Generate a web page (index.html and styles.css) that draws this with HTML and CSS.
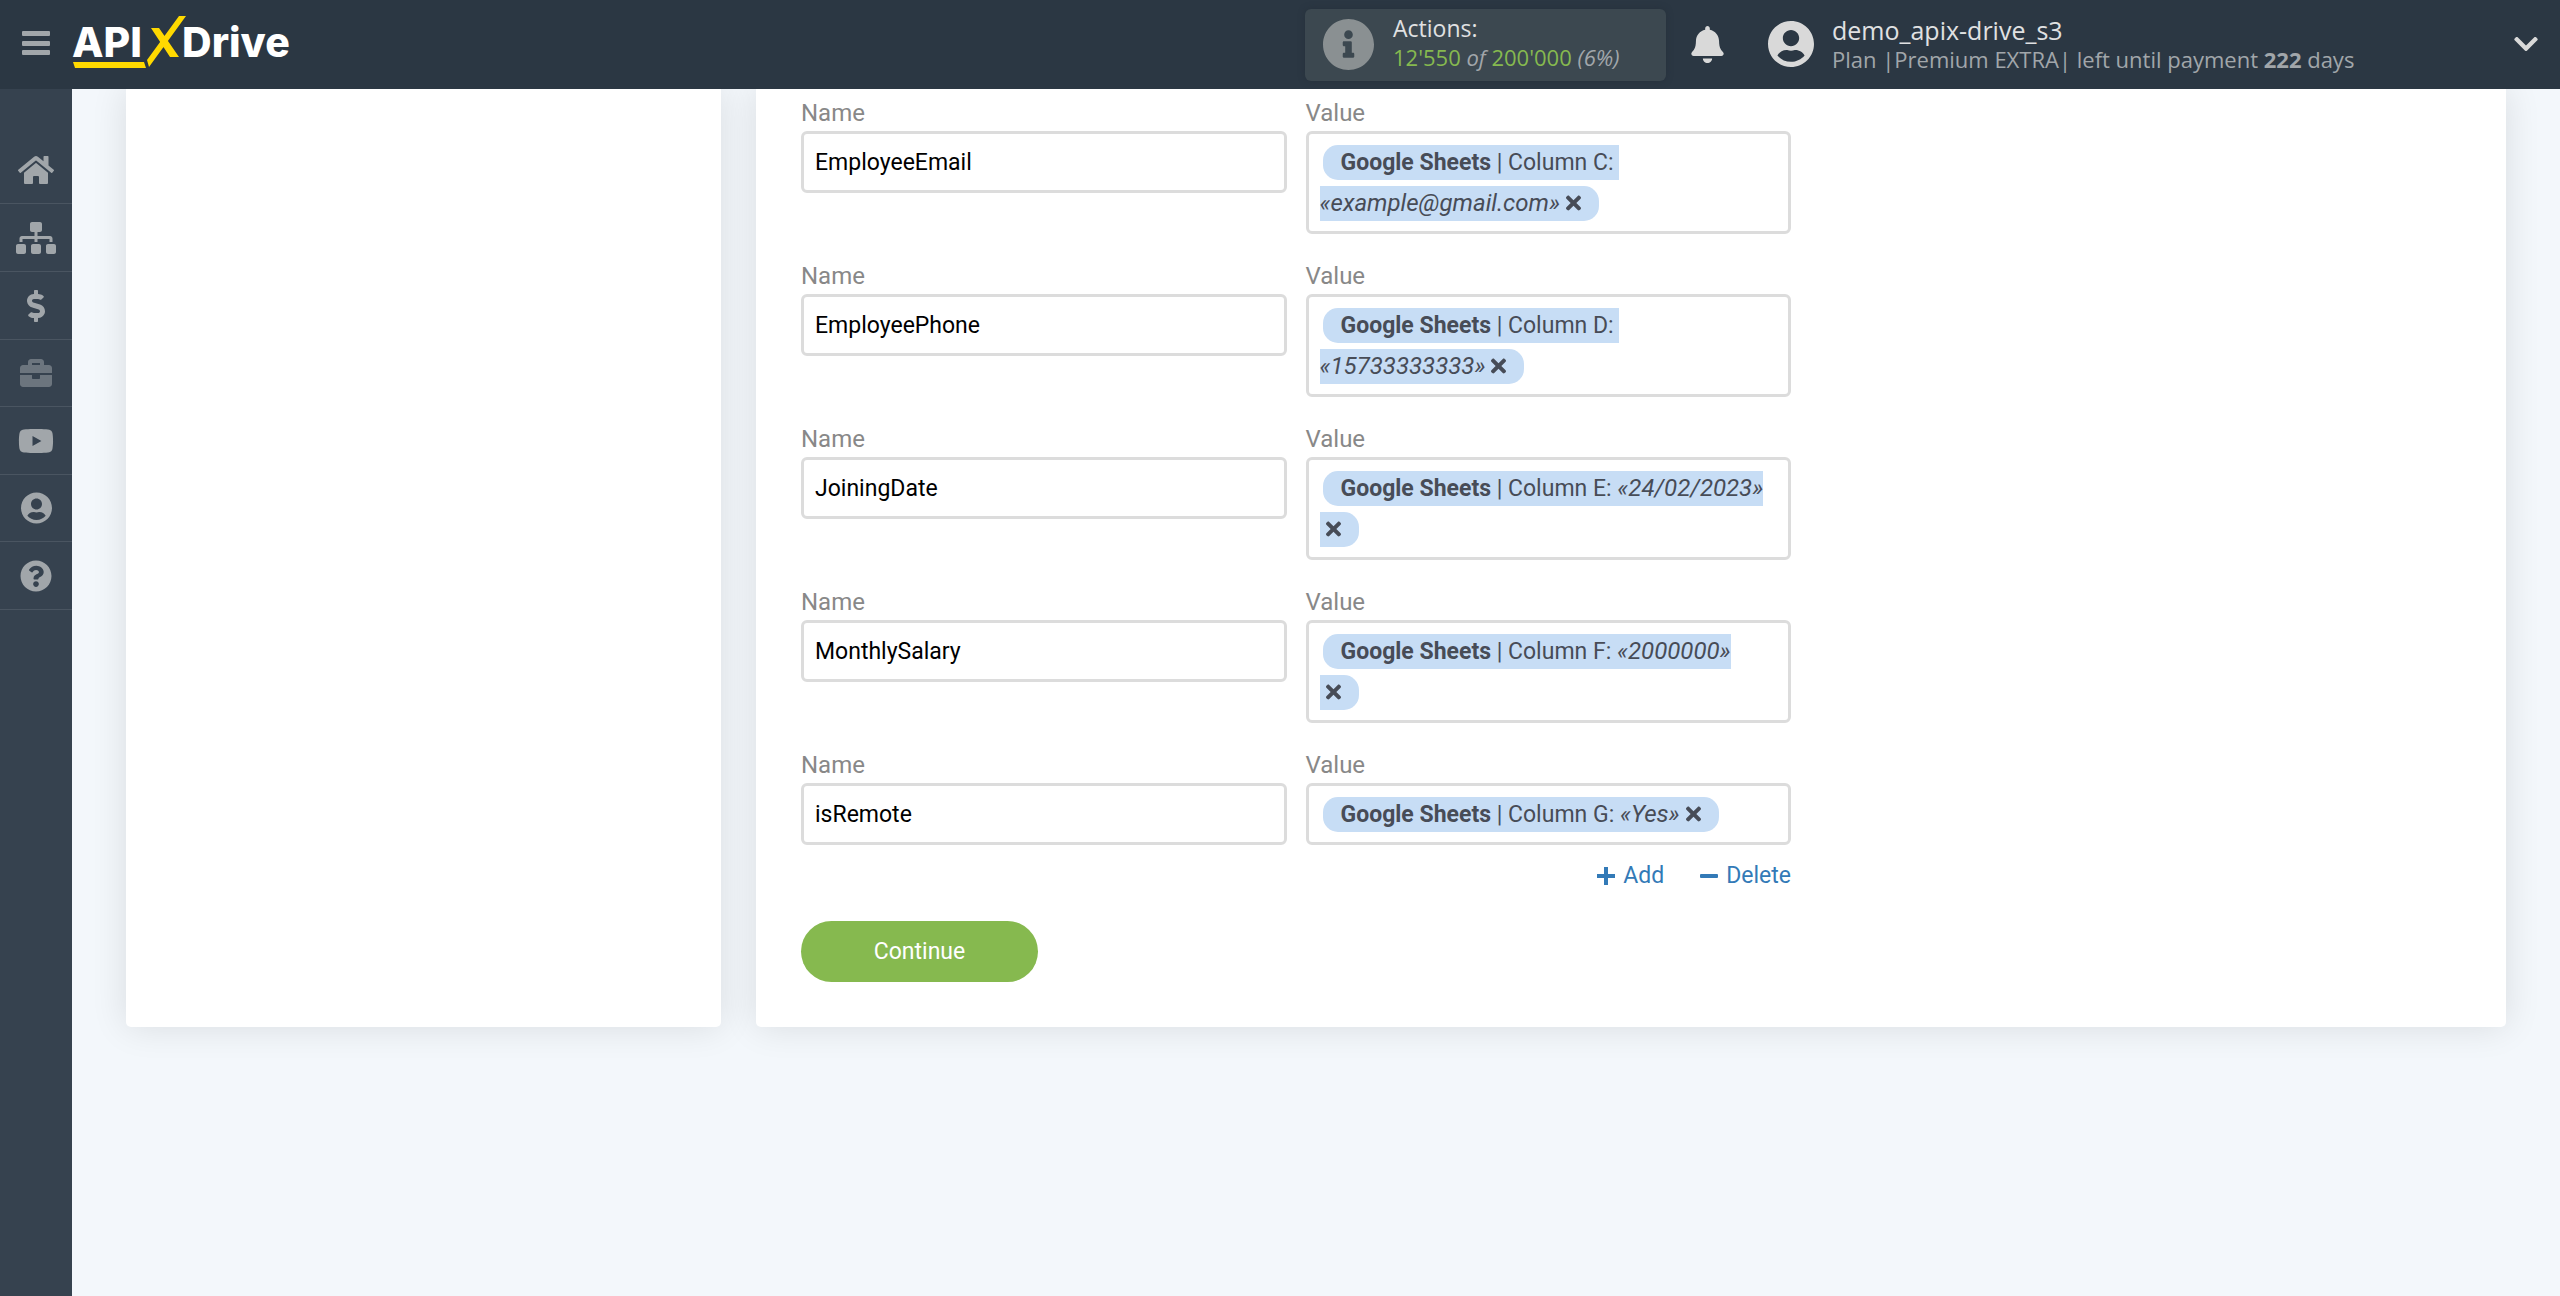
FILE: index.html
```html
<!DOCTYPE html>
<html lang="en">
<head>
<meta charset="utf-8">
<title>APIXDrive</title>
<link rel="stylesheet" href="styles.css">
</head>
<body>
<svg class="sprite" aria-hidden="true">
  <symbol id="user" viewBox="0 0 496 512"><path d="M248 8C111 8 0 119 0 256s111 248 248 248 248-111 248-248S385 8 248 8zm0 96c48.600 0 88 39.400 88 88s-39.400 88-88 88-88-39.400-88-88 39.400-88 88-88zm0 344c-58.700 0-111.300-26.600-146.500-68.200 18.800-35.400 55.600-59.800 98.500-59.800 2.400 0 4.800.4 7.100 1.100 13 4.200 26.600 6.900 40.900 6.900 14.300 0 28-2.700 40.900-6.900 2.300-.7 4.700-1.100 7.100-1.100 42.900 0 79.700 24.400 98.500 59.800C359.300 421.400 306.700 448 248 448z"/></symbol>
  <symbol id="times" viewBox="0 0 352 512"><path d="M242.720 256l100.070-100.070c12.280-12.280 12.280-32.190 0-44.480l-22.240-22.240c-12.280-12.280-32.190-12.280-44.480 0L176 189.280 75.930 89.210c-12.280-12.280-32.190-12.280-44.480 0L9.210 111.450c-12.280 12.280-12.280 32.190 0 44.480L109.280 256 9.210 356.070c-12.280 12.280-12.280 32.190 0 44.480l22.240 22.240c12.280 12.280 32.200 12.280 44.480 0L176 322.720l100.070 100.070c12.280 12.280 32.200 12.280 44.480 0l22.240-22.240c12.280-12.280 12.280-32.190 0-44.480L242.720 256z"/></symbol>
</svg>

<header class="topbar">
  <button class="icon-button menu" type="button" aria-label="Menu">
    <svg viewBox="0 0 28 24" width="28" height="24"><rect width="28" height="5" rx="1"/><rect y="10" width="28" height="5" rx="1"/><rect y="19" width="28" height="5" rx="1"/></svg>
  </button>
  <a class="logo" href="#" aria-label="APIXDrive">
    <svg viewBox="0 0 222 56" width="222" height="56">
      <text x="-1" y="41">API</text>
      <text x="109" y="41">Drive</text>
      <path class="logo-mark" d="M0 46h71l2 6H2zM106 0h7L76 51l-2-7zM78 12h8l20 29h-9z"/>
    </svg>
  </a>
  <div class="actions">
    <svg viewBox="8 8 496 496" width="51" height="51"><path d="M256 8C119.043 8 8 119.083 8 256c0 136.997 111.043 248 248 248s248-111.003 248-248C504 119.083 392.957 8 256 8zm0 110c23.196 0 42 18.804 42 42s-18.804 42-42 42-42-18.804-42-42 18.804-42 42-42zm56 254c0 6.627-5.373 12-12 12h-88c-6.627 0-12-5.373-12-12v-24c0-6.627 5.373-12 12-12h12v-64h-12c-6.627 0-12-5.373-12-12v-24c0-6.627 5.373-12 12-12h64c6.627 0 12 5.373 12 12v100h12c6.627 0 12 5.373 12 12v24z"/></svg>
    <div class="actions-text">
      <div class="title">Actions:</div>
      <div class="detail"><span class="count">12'550</span> <i>of</i> <span class="count">200'000</span> <i>(6%)</i></div>
    </div>
  </div>
  <button class="icon-button bell" type="button" aria-label="Notifications">
    <svg viewBox="0 0 448 512" width="33" height="37"><path d="M224 512c35.320 0 63.970-28.650 63.970-64H160.030c0 35.350 28.650 64 63.970 64zm215.390-149.710c-19.320-20.760-55.470-51.990-55.470-154.290 0-77.700-54.480-139.900-127.940-155.160V32c0-17.670-14.320-32-31.980-32s-31.980 14.330-31.980 32v20.840C118.560 68.100 64.080 130.300 64.080 208c0 102.300-36.150 133.530-55.470 154.290-6 6.450-8.660 14.160-8.610 21.710.11 16.400 12.980 32 32.100 32h383.800c19.120 0 32-15.600 32.100-32 .05-7.550-2.610-15.270-8.610-21.710z"/></svg>
  </button>
  <button class="account" type="button">
    <svg width="46" height="48"><use href="#user"/></svg>
    <span>
      <span class="title user-name">demo_apix-drive_s3</span>
      <span class="detail">Plan |Premium EXTRA| left until payment <b>222</b> days</span>
    </span>
    <svg class="chevron" viewBox="0 0 448 512" width="24" height="28"><path d="M207.029 381.476L12.686 187.132c-9.373-9.373-9.373-24.569 0-33.941l22.667-22.667c9.357-9.357 24.522-9.375 33.901-.04L224 284.505l154.745-154.021c9.379-9.335 24.544-9.317 33.901.04l22.667 22.667c9.373 9.373 9.373 24.569 0 33.941L240.971 381.476c-9.373 9.372-24.569 9.372-33.942 0z"/></svg>
  </button>
</header>

<div class="page">
  <nav class="sidebar" aria-label="Main">
    <a href="#" aria-label="Home"><svg viewBox="0 0 576 512" width="36" height="32"><path d="M280.370 148.260L96 300.110V464a16 16 0 0 0 16 16l112.060-.29a16 16 0 0 0 15.920-16V368a16 16 0 0 1 16-16h64a16 16 0 0 1 16 16v95.640a16 16 0 0 0 16 16.050L464 480a16 16 0 0 0 16-16V300L295.670 148.260a12.190 12.190 0 0 0-15.300 0zM571.600 251.470L488 182.560V44.050a12 12 0 0 0-12-12h-56a12 12 0 0 0-12 12v72.610L318.470 43a48 48 0 0 0-61 0L4.340 251.470a12 12 0 0 0-1.600 16.900l25.500 31A12 12 0 0 0 45.150 301l235.220-193.740a12.190 12.190 0 0 1 15.300 0L530.900 301a12 12 0 0 0 16.900-1.600l25.500-31a12 12 0 0 0-1.700-16.930z"/></svg></a>
    <a href="#" aria-label="Connections"><svg viewBox="0 0 640 512" width="40" height="32"><path d="M128 352H32c-17.670 0-32 14.330-32 32v96c0 17.670 14.330 32 32 32h96c17.670 0 32-14.330 32-32v-96c0-17.670-14.330-32-32-32zm-24-80h192v48h48v-48h192v48h48v-57.590c0-21.170-17.230-38.410-38.410-38.410H344v-64h40c17.670 0 32-14.330 32-32V32c0-17.670-14.330-32-32-32H256c-17.670 0-32 14.330-32 32v96c0 17.670 14.330 32 32 32h40v64H94.410C73.230 224 56 241.230 56 262.410V320h48v-48zm264 80h-96c-17.670 0-32 14.330-32 32v96c0 17.670 14.330 32 32 32h96c17.670 0 32-14.330 32-32v-96c0-17.670-14.330-32-32-32zm240 0h-96c-17.670 0-32 14.330-32 32v96c0 17.670 14.330 32 32 32h96c17.670 0 32-14.330 32-32v-96c0-17.670-14.330-32-32-32z"/></svg></a>
    <a href="#" aria-label="Billing"><svg viewBox="0 0 288 512" width="18" height="32"><path d="M209.200 233.400l-108-31.600C88.700 198.200 80 186.500 80 173.500c0-16.300 13.200-29.500 29.500-29.500h66.300c12.200 0 24.200 3.700 34.200 10.500 6.100 4.100 14.300 3.100 19.500-2l34.800-34c7.100-6.900 6.100-18.400-1.800-24.500C238 74.800 207.400 64.100 176 64V16c0-8.800-7.200-16-16-16h-32c-8.800 0-16 7.200-16 16v48h-2.500C45.800 64-5.400 118.700.5 183.600c4.200 46.100 39.400 83.600 83.800 96.600l102.500 30c12.500 3.700 21.200 15.300 21.200 28.300 0 16.300-13.200 29.500-29.500 29.500h-66.300C100 368 88 364.300 78 357.500c-6.100-4.100-14.300-3.100-19.500 2l-34.800 34c-7.100 6.900-6.100 18.400 1.800 24.500 24.500 19.200 55.100 29.900 86.500 30v48c0 8.800 7.200 16 16 16h32c8.800 0 16-7.200 16-16v-48.200c46.600-.9 90.300-28.600 105.700-72.700 21.500-61.600-14.600-124.800-72.500-141.700z"/></svg></a>
    <a class="muted" href="#" aria-label="Projects"><svg viewBox="0 0 512 512" width="32" height="32"><path d="M320 336c0 8.840-7.160 16-16 16h-96c-8.840 0-16-7.160-16-16v-48H0v144c0 25.600 22.400 48 48 48h416c25.600 0 48-22.400 48-48V288H320v48zm144-208h-80V80c0-25.600-22.400-48-48-48H176c-25.600 0-48 22.400-48 48v48H48c-25.600 0-48 22.400-48 48v80h512v-80c0-25.600-22.400-48-48-48zm-144 0H192V96h128v32z"/></svg></a>
    <a href="#" aria-label="Video guides"><svg viewBox="0 0 576 512" width="36" height="32"><path d="M549.655 124.083c-6.281-23.650-24.787-42.276-48.284-48.597C458.781 64 288 64 288 64S117.220 64 74.629 75.486c-23.497 6.322-42.003 24.947-48.284 48.597-11.412 42.867-11.412 132.305-11.412 132.305s0 89.438 11.412 132.305c6.281 23.650 24.787 41.500 48.284 47.821C117.220 448 288 448 288 448s170.780 0 213.371-11.486c23.497-6.321 42.003-24.171 48.284-47.821 11.412-42.867 11.412-132.305 11.412-132.305s0-89.438-11.412-132.305zm-317.510 213.508V175.185l142.739 81.205-142.739 81.201z"/></svg></a>
    <a href="#" aria-label="Profile"><svg width="31" height="32"><use href="#user"/></svg></a>
    <a href="#" aria-label="Help"><svg viewBox="0 0 512 512" width="32" height="32"><path d="M504 256c0 136.997-111.043 248-248 248S8 392.997 8 256C8 119.083 119.043 8 256 8s248 111.083 248 248zM262.655 90c-54.497 0-89.255 22.957-116.549 63.758-3.536 5.286-2.353 12.415 2.715 16.258l34.699 26.310c5.205 3.947 12.621 3.008 16.665-2.122 17.864-22.658 30.113-35.797 57.303-35.797 20.429 0 45.698 13.148 45.698 32.958 0 14.976-12.363 22.667-32.534 33.976C247.128 238.528 216 254.941 216 296v4c0 6.627 5.373 12 12 12h56c6.627 0 12-5.373 12-12v-1.333c0-28.462 83.186-29.647 83.186-106.667 0-58.002-60.165-102-116.531-102zM256 338c-25.365 0-46 20.635-46 46 0 25.364 20.635 46 46 46s46-20.636 46-46c0-25.365-20.635-46-46-46z"/></svg></a>
  </nav>

  <main class="content">
    <section class="card" aria-label="Steps"></section>
    <section class="card">
      <form class="fields">
        <div class="field"><label for="n1">Name</label><input id="n1" type="text" value="EmployeeEmail"></div>
        <div class="field"><span class="label" id="v1">Value</span><div class="value" role="textbox" aria-labelledby="v1"><span class="chip"><b>Google Sheets</b> | Column C:&nbsp;<wbr><i>«example@gmail.com»</i><wbr><button class="remove" type="button" aria-label="Remove"><svg width="15" height="22"><use href="#times"/></svg></button></span></div></div>

        <div class="field"><label for="n2">Name</label><input id="n2" type="text" value="EmployeePhone"></div>
        <div class="field"><span class="label" id="v2">Value</span><div class="value" role="textbox" aria-labelledby="v2"><span class="chip"><b>Google Sheets</b> | Column D:&nbsp;<wbr><i>«15733333333»</i><wbr><button class="remove" type="button" aria-label="Remove"><svg width="15" height="22"><use href="#times"/></svg></button></span></div></div>

        <div class="field"><label for="n3">Name</label><input id="n3" type="text" value="JoiningDate"></div>
        <div class="field"><span class="label" id="v3">Value</span><div class="value" role="textbox" aria-labelledby="v3"><span class="chip"><b>Google Sheets</b> | Column E:&nbsp;<wbr><i>«24/02/2023»</i><wbr><button class="remove" type="button" aria-label="Remove"><svg width="15" height="22"><use href="#times"/></svg></button></span></div></div>

        <div class="field"><label for="n4">Name</label><input id="n4" type="text" value="MonthlySalary"></div>
        <div class="field"><span class="label" id="v4">Value</span><div class="value" role="textbox" aria-labelledby="v4"><span class="chip"><b>Google Sheets</b> | Column F:&nbsp;<wbr><i>«2000000»</i><wbr><button class="remove" type="button" aria-label="Remove"><svg width="15" height="22"><use href="#times"/></svg></button></span></div></div>

        <div class="field"><label for="n5">Name</label><input id="n5" type="text" value="isRemote"></div>
        <div class="field"><span class="label" id="v5">Value</span><div class="value" role="textbox" aria-labelledby="v5"><span class="chip"><b>Google Sheets</b> | Column G:&nbsp;<wbr><i>«Yes»</i><wbr><button class="remove" type="button" aria-label="Remove"><svg width="15" height="22"><use href="#times"/></svg></button></span></div></div>
      </form>
      <div class="row-links">
        <a href="#"><svg viewBox="0 0 18 18" width="18" height="18"><path d="M7 0h4v7h7v4h-7v7H7v-7H0V7h7z"/></svg>Add</a>
        <a href="#"><svg viewBox="0 0 18 18" width="18" height="18"><rect y="7" width="18" height="4" rx="1"/></svg>Delete</a>
      </div>
      <button class="continue" type="button">Continue</button>
    </section>
  </main>
</div>
</body>
</html>
```
FILE: styles.css
```css
* {
  box-sizing: border-box;
}

body {
  margin: 0;
  min-height: 100vh;
  display: flex;
  flex-direction: column;
  background: #f3f7fb;
  color: #474c57;
  font: 23px/32px Roboto, sans-serif;
}

svg {
  display: block;
  fill: currentColor;
}

.sprite {
  display: none;
}

button {
  border: 0;
  padding: 0;
  background: none;
  color: inherit;
  font: inherit;
}

a {
  text-decoration: none;
}

/* Top bar */

.topbar {
  display: flex;
  align-items: center;
  height: 89px;
  padding: 0 22px;
  background: #2b3743;
  color: #d9d9d9;
  font-family: "Open Sans", sans-serif;
  position: relative;
  z-index: 1;
}

.menu {
  padding-bottom: 4px;
  color: #a1a6aa;
}

.logo {
  margin: 0 auto 0 23px;
  padding-bottom: 2px;
  color: #fff;
  font: 800 41px Inter, sans-serif;
}

.logo svg {
  overflow: visible;
}

.logo-mark {
  fill: #ffd900;
}

.actions {
  display: flex;
  align-items: center;
  gap: 19px;
  width: 361px;
  height: 72px;
  padding: 0 18px;
  border-radius: 6px;
  background: #3c4850;
  box-shadow: 0 0 6px #26313c;
}

.actions svg {
  color: #8a9092;
}

.actions-text {
  padding-bottom: 6px;
}

.title {
  display: block;
  font-size: 23px;
  line-height: 30px;
  color: #e0e1e2;
}

.user-name {
  font-size: 25px;
}

.detail {
  display: block;
  font-size: 22px;
  line-height: 28px;
  color: #a1a6aa;
}

.count {
  color: #86b94f;
}

.bell {
  margin: 0 44px 0 25px;
}

.account {
  display: flex;
  align-items: center;
  gap: 18px;
  width: 770px;
  padding-bottom: 2px;
  text-align: left;
}

.chevron {
  margin-left: auto;
}

/* Side navigation */

.page {
  flex: 1;
  display: flex;
}

.sidebar {
  width: 72px;
  padding-top: 47px;
  background: #36424f;
  display: grid;
  grid-template-rows: 68px 68px 68px 67px 68px 67px 68px;
}

.sidebar a {
  display: flex;
  align-items: center;
  justify-content: center;
  border-bottom: 1px solid #4a5561;
  color: #a1a6aa;
}

.sidebar .muted {
  color: #6c757e;
}

/* Cards */

.content {
  flex: 1;
  display: grid;
  grid-template-columns: 25% 1fr;
  gap: 35px;
  align-items: stretch;
  align-content: start;
  padding: 0 54px;
}

.card {
  padding: 6px 45px 45px;
  border-radius: 0 0 5px 5px;
  background: #fff;
  box-shadow: 0 0 36px rgba(0, 0, 0, 0.11);
}

.fields {
  max-width: 990px;
  display: grid;
  grid-template-columns: 1fr 1fr;
  gap: 24px 19px;
}

label,
.label {
  display: block;
  font-size: 24px;
  line-height: 36px;
  color: #888;
}

input,
.value {
  display: block;
  width: 100%;
  border: 3px solid #dcdcdc;
  border-radius: 6px;
  background: #fff;
}

input {
  height: 62px;
  padding: 0 11px;
  color: #000;
  font: inherit;
}

.value {
  padding: 8px 21px 7px 11px;
  line-height: 41px;
}

.chip {
  margin-left: 3px;
  padding: 4px 18px;
  border-radius: 15px;
  background: #c7ddf5;
}

.chip i {
  font-size: 24px;
  line-height: 32px;
}

.remove {
  display: inline-block;
  margin-left: 6px;
  line-height: 0;
  vertical-align: -3px;
}

.row-links {
  max-width: 990px;
  margin: 15px 0 29px;
  display: flex;
  justify-content: flex-end;
  gap: 36px;
}

.row-links a {
  display: flex;
  align-items: center;
  gap: 8px;
  color: #337ab7;
}

.continue {
  display: block;
  width: 237px;
  height: 61px;
  border-radius: 31px;
  background: #86b94f;
  color: #fff;
}
```
